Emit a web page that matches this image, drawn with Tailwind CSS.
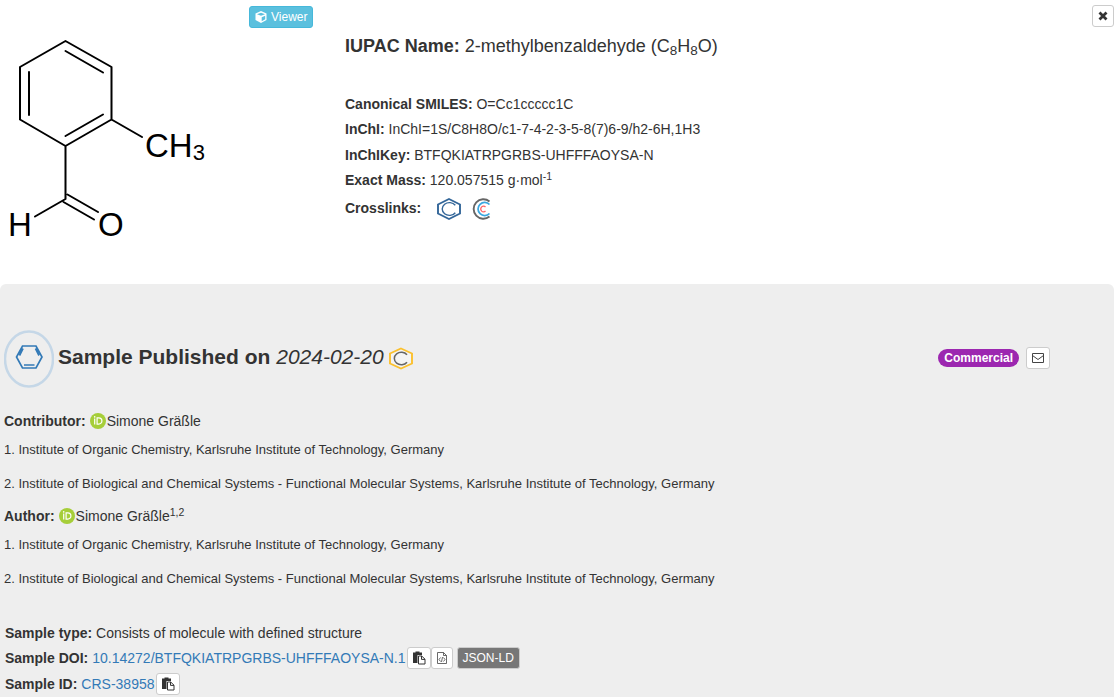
<!DOCTYPE html>
<html lang="en">
<head>
<meta charset="utf-8">
<meta name="viewport" content="width=device-width, initial-scale=1">
<title>2-methylbenzaldehyde</title>
<script src="https://cdn.jsdelivr.net/npm/@tailwindcss/browser@4"></script>
</head>
<body class="bg-white font-['Liberation_Sans',Arial,sans-serif] text-sm text-[#333]">
<svg class="hidden" aria-hidden="true">
  <symbol id="orcid" viewBox="0 0 16 16"><circle cx="8" cy="8" r="8" fill="#a6ce39"/><path d="M4.700 5.600v6M7.100 4.900v6.200h1.700a3.100 3.100 0 0 0 0-6.200z" fill="none" stroke="#fff" stroke-width="1.200"/><circle cx="4.700" cy="3.900" r=".8" fill="#fff"/></symbol>
  <symbol id="paste" viewBox="0 0 14 14"><path d="M1 1.500h2.500V.5h4v1H10V4H5.500v8H1z" fill="#333"/><path d="M6.500 5h3.200l3.300 3.200V13H6.500zM9.500 5v3.400H13" fill="#fff" stroke="#333"/></symbol>
</svg>
<header class="flex h-[284px] items-start">
  <div class="relative w-[345px] shrink-0">
    <svg class="block h-[250px] w-[230px]" viewBox="0 0 230 250" role="img" aria-label="Structure of 2-methylbenzaldehyde">
      <path d="M65.500 41L111.500 67V119.500L65.500 146L20 119.500V67ZM65.500 51L103 72.500M29 72V115M65.500 136L103 114.500M111.500 119.500L142 137M65.500 146V199L35 216.500M67.500 194.500L98 212M63.500 202L94 219.500" fill="none" stroke="#000" stroke-width="2" stroke-linecap="round" stroke-linejoin="round"/>
      <g fill="#000" font-size="33"><text x="145" y="157">CH<tspan font-size="22" dy="3">3</tspan></text><text x="8" y="236">H</text><text x="98" y="236">O</text></g>
    </svg>
    <button type="button" class="absolute top-1.5 left-[249px] flex h-[22px] items-center gap-1 rounded-[3px] border border-[#46b8da] bg-[#5bc0de] px-[5px] text-xs font-normal text-white">
      <svg class="size-3" viewBox="0 0 12 12"><path d="M6 0l5.500 2.500v6.500L6 12 .5 9V2.500z" fill="#fff"/><path d="M2 3.200L6 4.800l4-1.600L6 1.700z" fill="#5bc0de"/><path d="M6.700 6.200l3.500-1.500v3.500L6.700 10.200z" fill="#5bc0de"/></svg>
      Viewer
    </button>
  </div>
  <div class="min-w-0 flex-1 pt-9">
    <h1 class="text-lg leading-5"><b>IUPAC Name:</b> 2-methylbenzaldehyde (C<sub>8</sub>H<sub>8</sub>O)</h1>
    <div class="mt-9 leading-[25px]">
      <p><b>Canonical SMILES:</b> O=Cc1ccccc1C</p>
      <p><b>InChI:</b> InChI=1S/C8H8O/c1-7-4-2-3-5-8(7)6-9/h2-6H,1H3</p>
      <p class="pt-px"><b>InChIKey:</b> BTFQKIATRPGRBS-UHFFFAOYSA-N</p>
      <p><b>Exact Mass:</b> 120.057515 g·mol<sup>-1</sup></p>
      <div class="mt-[3px] flex items-center"><b>Crosslinks:</b>
        <a href="#" class="ml-[15px]" aria-label="Chemotion"><svg class="h-6 w-[26px]" viewBox="0 0 26 24"><path d="M13 2l11 5.500v9L13 22 2 16.500v-9z" fill="none" stroke="#336699" stroke-width="1.900"/><path d="M19.300 8.300a7.200 6.400 0 1 0 0 7.400" fill="none" stroke="#336699" stroke-width="1.400"/></svg></a>
        <a href="#" class="ml-2.5" aria-label="Crosslink"><svg class="h-6 w-5" viewBox="0 0 20 24"><path d="M17.500 4.500a9.700 9.700 0 1 0 0 15" fill="none" stroke="#666" stroke-width="1.900"/><path d="M17.500 7.500a6.600 6.600 0 1 0 0 9" fill="none" stroke="#3ba7df" stroke-width="1.800"/><path d="M13.500 10a2.700 2.900 0 1 0 0 4" fill="none" stroke="#f66" stroke-width="1.200"/></svg></a>
      </div>
    </div>
  </div>
  <button type="button" aria-label="Close" class="mt-[5px] mr-1 flex size-[22px] items-center justify-center rounded-[3px] border border-[#ccc] bg-white"><svg class="size-2.5" viewBox="0 0 10 10"><path d="M1.500 1.500l7 7M8.500 1.500l-7 7" stroke="#333" stroke-width="2.800"/></svg></button>
</header>
<main class="mr-1 rounded-t-md bg-[#eee] pt-[46px] pb-px pl-1">
  <div class="flex items-center pr-16">
    <svg class="h-[58px] w-[50px] shrink-0" viewBox="0 0 50 58"><ellipse cx="25" cy="29" rx="24" ry="27.500" fill="none" stroke="#c5d7e7" stroke-width="2.500"/><path d="M18.500 16h13.500l6 11-6 11H18.500l-6-11zM20 35h10.500M19 18.500L15.500 25.500M31.500 18.500L35 25.500" fill="none" stroke="#337ab7" stroke-width="1.700"/></svg>
    <h2 class="ml-1 pb-1 text-[21px] leading-6"><b>Sample Published on</b> <i>2024-02-20</i></h2>
    <svg class="ml-1 h-6 w-[26px]" viewBox="0 0 26 24"><path d="M13 1.500l11 5v10L13 21.500 2 16.500v-10z" fill="#f4f4f4" stroke="#fbc02d" stroke-width="1.900"/><path d="M19 7.800a7 6.300 0 1 0 0 7.400" fill="none" stroke="#666" stroke-width="1.500"/></svg>
    <span class="mb-0.5 ml-auto rounded-full bg-[#9c27b0] px-1.5 text-xs leading-[18px] font-bold text-white">Commercial</span>
    <button type="button" aria-label="Email" class="mb-0.5 ml-[7px] flex h-[22px] w-6 items-center justify-center rounded-[3px] border border-[#ccc] bg-white"><svg class="h-2.5 w-3" viewBox="0 0 12 10"><path d="M.5.5h11v9H.5zM.5 2.500L6 6.500l5.500-4" fill="none" stroke="#444"/></svg></button>
  </div>
  <section class="mt-[23px]">
    <div class="flex h-5 items-center"><b>Contributor:</b><svg class="mr-px ml-1 size-4"><use href="#orcid"/></svg>Simone Gräßle</div>
    <p class="mt-[9px] text-[13px] leading-5">1. Institute of Organic Chemistry, Karlsruhe Institute of Technology, Germany</p>
    <p class="mt-3.5 text-[13px] leading-5">2. Institute of Biological and Chemical Systems - Functional Molecular Systems, Karlsruhe Institute of Technology, Germany</p>
  </section>
  <section class="mt-3">
    <div class="flex h-5 items-center"><b>Author:</b><svg class="mr-px ml-1 size-4"><use href="#orcid"/></svg><span>Simone Gräßle<sup>1,2</sup></span></div>
    <p class="mt-[9px] text-[13px] leading-5">1. Institute of Organic Chemistry, Karlsruhe Institute of Technology, Germany</p>
    <p class="mt-3.5 text-[13px] leading-5">2. Institute of Biological and Chemical Systems - Functional Molecular Systems, Karlsruhe Institute of Technology, Germany</p>
  </section>
  <section class="mt-8 pl-px">
    <div class="h-6 leading-[25px]"><b>Sample type:</b> Consists of molecule with defined structure</div>
    <div class="flex h-[26px] items-center"><b>Sample DOI:</b><a href="#" class="ml-1 text-[#337ab7]">10.14272/BTFQKIATRPGRBS-UHFFFAOYSA-N.1</a>
      <button type="button" aria-label="Copy DOI" class="ml-px flex h-[22px] w-6 items-center justify-center rounded-[3px] border border-[#ccc] bg-white"><svg class="size-3.5"><use href="#paste"/></svg></button>
      <button type="button" aria-label="Copy code" class="flex size-[22px] items-center justify-center rounded-[3px] border border-[#ccc] bg-white"><svg class="h-3 w-2.5" viewBox="0 0 10 12"><path d="M.5.5h6l3 3v8h-9zM6.500.5v3h3M3.500 5.500L2 7.500l1.500 2M6.500 5.500L8 7.500l-1.500 2M5.500 5l-1 5" fill="none" stroke="#444" stroke-width=".8"/></svg></button>
      <button type="button" class="ml-1 h-[22px] rounded-[3px] border border-[#ccc] bg-[#777] px-[5px] text-xs text-white">JSON-LD</button>
    </div>
    <div class="flex h-[26px] items-center"><b>Sample ID:</b><a href="#" class="ml-1 text-[#337ab7]">CRS-38958</a>
      <button type="button" aria-label="Copy ID" class="ml-px flex h-[22px] w-6 items-center justify-center rounded-[3px] border border-[#ccc] bg-white"><svg class="size-3.5"><use href="#paste"/></svg></button>
    </div>
  </section>
</main>
</body>
</html>
